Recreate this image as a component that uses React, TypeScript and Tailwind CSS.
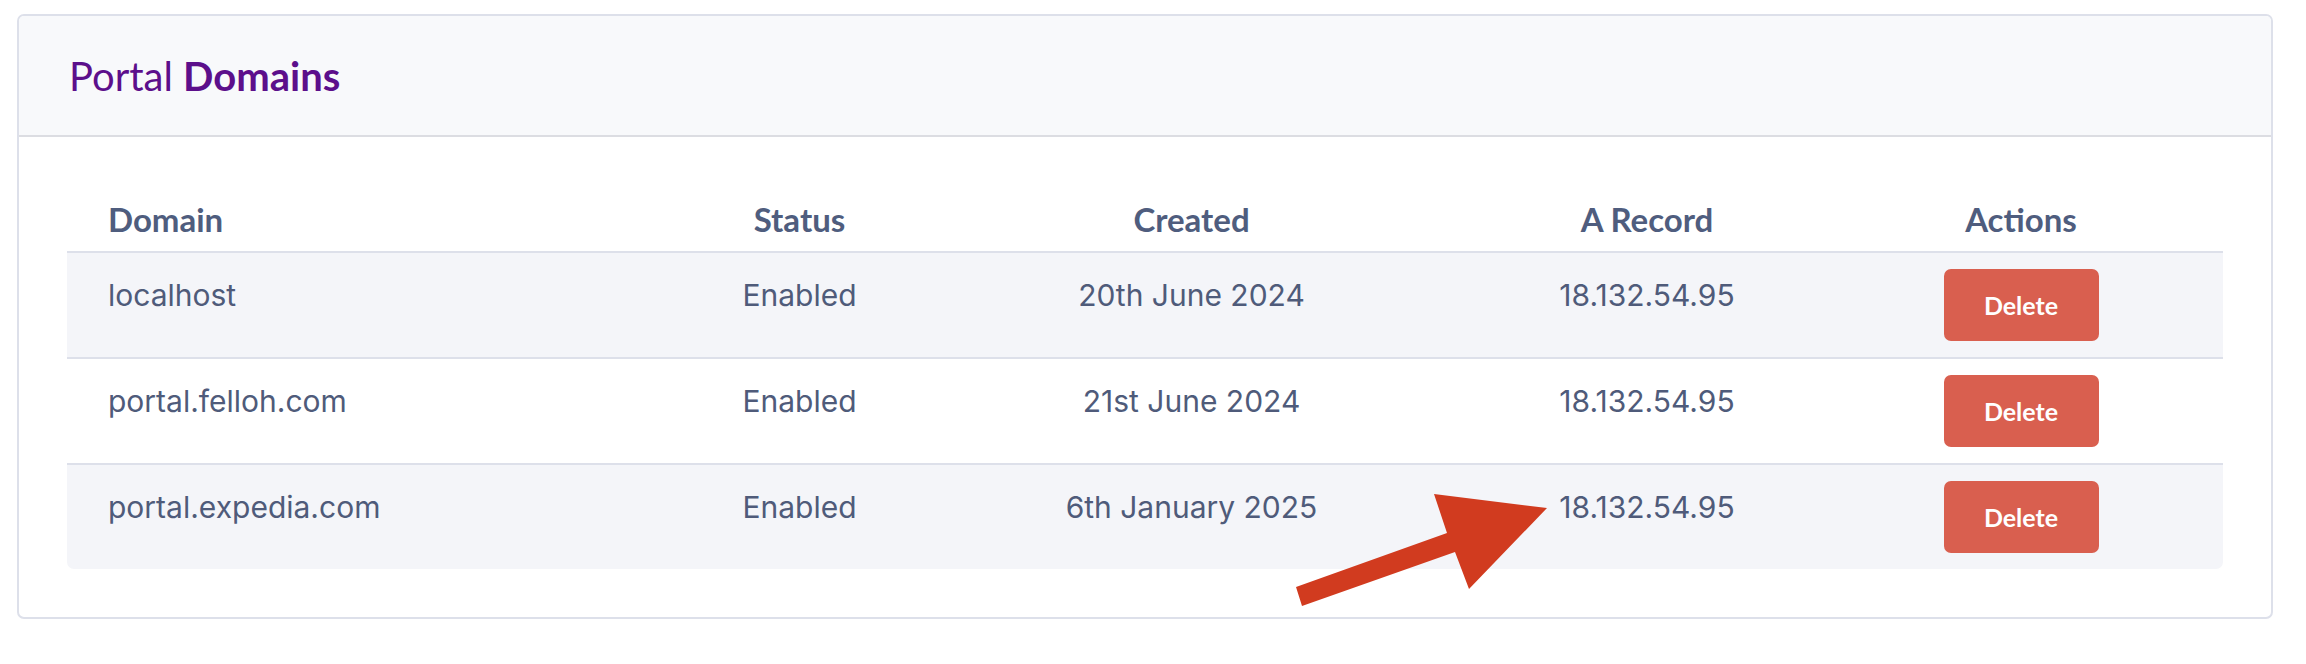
type DomainRow = {
  domain: string;
  status: string;
  created: string;
  aRecord: string;
};

const rows: DomainRow[] = [
  { domain: "localhost", status: "Enabled", created: "20th June 2024", aRecord: "18.132.54.95" },
  { domain: "portal.felloh.com", status: "Enabled", created: "21st June 2024", aRecord: "18.132.54.95" },
  { domain: "portal.expedia.com", status: "Enabled", created: "6th January 2025", aRecord: "18.132.54.95" },
];

const heading = "font-['Lato','Noto_Sans',sans-serif]";
const body = "font-['Inter','Noto_Sans',sans-serif]";
const cols = "grid grid-cols-[600px_265px_519px_392px_356px_1fr]";

function DeleteButton() {
  return (
    <button
      type="button"
      className={`${heading} h-[72px] w-[155px] rounded-[7px] bg-[#d95f4f] text-[25px] font-bold text-white`}
    >
      Delete
    </button>
  );
}

function Arrow() {
  // red annotation arrow pointing at the last A record
  return (
    <svg
      className="pointer-events-none absolute left-0 top-0"
      width="2306"
      height="664"
      viewBox="0 0 2306 664"
    >
      <polygon
        points="1547,508 1434,494 1447,533 1296,587 1302,606 1455,552 1469,589"
        fill="#d13b1f"
      />
    </svg>
  );
}

export default function App() {
  return (
    <div className="relative h-[664px] w-[2306px] bg-white pt-[14px]">
      <div className="ml-[17px] w-[2256px] overflow-hidden rounded-[7px] border-2 border-[#dde0ea]">
        {/* Header */}
        <div className="flex h-[121px] items-center border-b-2 border-[#dcdde2] bg-[#f8f9fb] pl-[50px]">
          <h2 className={`${heading} text-[40px] leading-none text-[#5c0f8b]`}>
            Portal <span className="font-bold">Domains</span>
          </h2>
        </div>

        {/* Body */}
        <div className="p-[48px]">
          <div className="overflow-hidden rounded-b-[7px]">
            <div
              className={`${cols} ${heading} h-[68px] items-center border-b-2 border-[#dde0ea] pt-[4px] text-[33px] font-bold text-[#4f5d7e]`}
            >
              <div className="pl-[41px]">Domain</div>
              <div className="text-center">Status</div>
              <div className="text-center">Created</div>
              <div className="text-center">A Record</div>
              <div className="text-center">Actions</div>
              <div />
            </div>
            {rows.map((row, i) => {
              const last = i === rows.length - 1;
              return (
                <div
                  key={row.domain}
                  className={`${cols} ${body} pt-[16px] text-[30px] leading-[53px] text-[#4f5b7a] ${
                    i % 2 === 0 ? "bg-[#f4f5f9]" : "bg-white"
                  } ${last ? "h-[104px]" : "h-[106px] border-b-2 border-[#dde0ea]"}`}
                >
                  <div className="pl-[41px]">{row.domain}</div>
                  <div className="text-center">{row.status}</div>
                  <div className="text-center">{row.created}</div>
                  <div className="text-center">{row.aRecord}</div>
                  <div className="flex justify-center">
                    <DeleteButton />
                  </div>
                  <div />
                </div>
              );
            })}
          </div>
        </div>
      </div>
      <Arrow />
    </div>
  );
}
